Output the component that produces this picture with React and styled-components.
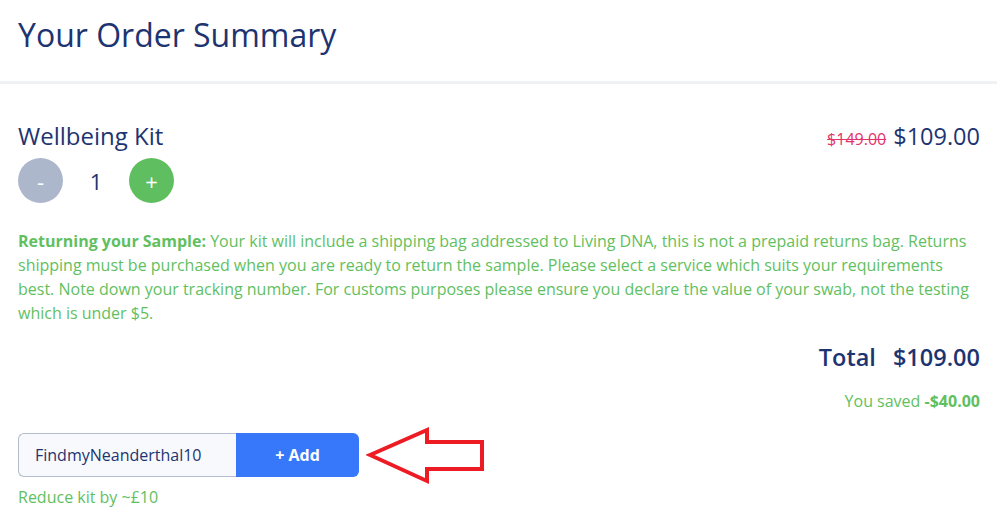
import React from 'react';
import styled, { createGlobalStyle } from 'styled-components';

const GlobalStyle = createGlobalStyle`
  body {
    margin: 0;
    background: #ffffff;
    font-family: "Open Sans", "Noto Sans", sans-serif;
  }
`;

const navy = '#1d3471';
const green = '#62bf5f';

const Header = styled.header`
  padding: 13px 18px 24px;
  border-bottom: 3px solid #eef2f5;
`;

const Title = styled.h1`
  margin: 0;
  font-size: 32px;
  line-height: 44px;
  font-weight: 400;
  color: ${navy};
`;

const Main = styled.main`
  padding: 36px 17px 0 18px;
`;

const ProductRow = styled.div`
  display: flex;
  justify-content: space-between;
  align-items: baseline;
`;

const ProductName = styled.h2`
  margin: 0;
  font-size: 24px;
  line-height: 32px;
  font-weight: 400;
  color: ${navy};
`;

const Prices = styled.div`
  display: flex;
  align-items: baseline;
  gap: 7px;
`;

const OldPrice = styled.s`
  font-size: 16px;
  color: #e3336a;
`;

const Price = styled.span`
  font-size: 23.5px;
  color: ${navy};
`;

const Counter = styled.div`
  display: flex;
  align-items: center;
  margin-top: 6px;
`;

const RoundButton = styled.button`
  width: 45px;
  height: 45px;
  border: none;
  border-radius: 50%;
  padding: 0;
  background: ${(p) => (p.$add ? '#5fbf60' : '#adb7cc')};
  color: #ffffff;
  font-family: inherit;
  font-size: 22px;
  line-height: 1;
  display: flex;
  align-items: center;
  justify-content: center;
  cursor: pointer;
`;

const Qty = styled.span`
  width: 66px;
  text-align: center;
  font-size: 22px;
  color: ${navy};
`;

const Notice = styled.p`
  margin: 26px 0 0;
  font-size: 16px;
  line-height: 24px;
  color: ${green};

  strong {
    font-weight: 700;
  }
`;

const TotalRow = styled.div`
  margin-top: 17px;
  display: flex;
  justify-content: flex-end;
  gap: 17px;
  font-size: 23.5px;
  line-height: 30px;
  font-weight: 600;
  color: ${navy};
`;

const Saved = styled.div`
  margin-top: 17px;
  text-align: right;
  font-size: 16px;
  line-height: 24px;
  color: ${green};

  strong {
    font-weight: 700;
  }
`;

const CouponRow = styled.div`
  margin-top: 20px;
  display: flex;
  align-items: center;
`;

const CouponGroup = styled.div`
  display: flex;
  height: 44px;
  width: 341px;
`;

const CouponInput = styled.input`
  box-sizing: border-box;
  width: 218px;
  height: 44px;
  border: 1px solid #b3bbcf;
  border-right: none;
  border-radius: 6px 0 0 6px;
  background: #f8f9fc;
  padding: 0 16px;
  font-family: inherit;
  font-size: 16px;
  color: ${navy};
  outline: none;
`;

const AddButton = styled.button`
  flex: 1;
  border: none;
  border-radius: 0 6px 6px 0;
  background: #3778fa;
  color: #ffffff;
  font-family: inherit;
  font-size: 16px;
  font-weight: 700;
  cursor: pointer;
`;

const Arrow = styled.svg`
  margin: -9px 0 -9px 7px;
  flex: none;
`;

const Hint = styled.div`
  margin-top: 8px;
  font-size: 16px;
  line-height: 24px;
  color: ${green};
`;

const App = () => {
  return (
    <>
      <GlobalStyle />
      <Header>
        <Title>Your Order Summary</Title>
      </Header>
      <Main>
        <ProductRow>
          <ProductName>Wellbeing Kit</ProductName>
          <Prices>
            <OldPrice>$149.00</OldPrice>
            <Price>$109.00</Price>
          </Prices>
        </ProductRow>
        <Counter>
          <RoundButton>-</RoundButton>
          <Qty>1</Qty>
          <RoundButton $add>+</RoundButton>
        </Counter>
        <Notice>
          <strong>Returning your Sample:</strong> Your kit will include a shipping bag addressed to Living DNA, this is not a prepaid returns bag. Returns shipping must be purchased when you are ready to return the sample. Please select a service which suits your requirements best. Note down your tracking number. For customs purposes please ensure you declare the value of your swab, not the testing which is under $5.
        </Notice>
        <TotalRow>
          <span>Total</span>
          <span>$109.00</span>
        </TotalRow>
        <Saved>
          You saved <strong>-$40.00</strong>
        </Saved>
        <CouponRow>
          <CouponGroup>
            <CouponInput defaultValue="FindmyNeanderthal10" />
            <AddButton>+ Add</AddButton>
          </CouponGroup>
          <Arrow width="122" height="62" viewBox="0 0 122 62">
            <polygon
              points="4,31 61,6 61,18 116,18 116,45 61,45 61,57"
              fill="none"
              stroke="#ed1c24"
              strokeWidth="4"
              strokeLinejoin="miter"
            />
          </Arrow>
        </CouponRow>
        <Hint>Reduce kit by ~£10</Hint>
      </Main>
    </>
  );
};

export default App;
